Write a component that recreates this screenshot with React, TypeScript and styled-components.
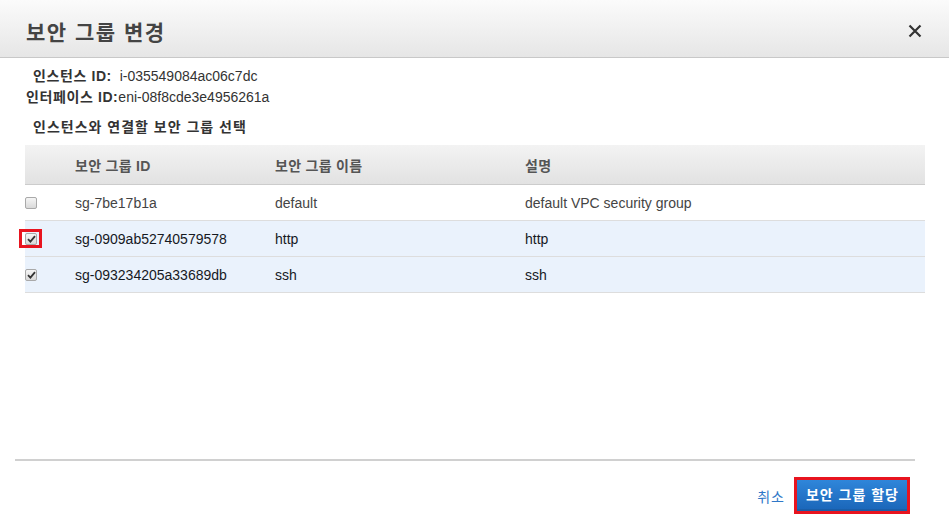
import React, { useState } from "react";
import styled, { createGlobalStyle } from "styled-components";

const GlobalStyle = createGlobalStyle`
  html, body {
    margin: 0;
    padding: 0;
    background: #fff;
  }
  body {
    font-family: "Liberation Sans", Arial, "Noto Sans CJK KR", sans-serif;
    font-size: 14px;
    color: #444;
  }
`;

const Modal = styled.div`
  width: 949px;
  height: 529px;
  display: flex;
  flex-direction: column;
  background: #fff;
`;

const ModalHeader = styled.div`
  height: 58px;
  flex-shrink: 0;
  display: flex;
  align-items: center;
  justify-content: space-between;
  padding: 5px 27px 0 26px;
  box-sizing: border-box;
  background: linear-gradient(to bottom, #fbfbfb, #e6e6e6);
  border-bottom: 1px solid #c8c8c8;
`;

const Title = styled.h1`
  margin: 0;
  font-size: 21px;
  font-weight: bold;
  letter-spacing: 1.5px;
  color: #444;
`;

const CloseButton = styled.button`
  border: 0;
  background: none;
  padding: 0;
  width: 14px;
  height: 14px;
  display: flex;
  cursor: pointer;
`;

const Body = styled.div`
  flex: 1;
  padding: 8px 24px 0 25px;
`;

const InfoLine = styled.div<{ $indent?: number }>`
  padding-left: ${(p) => p.$indent ?? 0}px;
  line-height: 21px;
  color: #333;
`;

const Label = styled.b`
  color: #333;
  letter-spacing: 0.6px;
`;

const SectionTitle = styled.div`
  margin-top: 9px;
  padding-left: 8px;
  font-weight: bold;
  letter-spacing: 1px;
  color: #333;
  line-height: 21px;
`;

const Table = styled.table`
  margin-top: 7px;
  width: 900px;
  border-collapse: collapse;
  table-layout: fixed;
`;

const HeadCell = styled.th<{ $w?: number }>`
  width: ${(p) => (p.$w ? `${p.$w}px` : "auto")};
  height: 39px;
  padding: 0;
  text-align: left;
  font-weight: bold;
  letter-spacing: 0.3px;
  color: #555;
  background: linear-gradient(to bottom, #f3f3f3, #e2e2e2);
  border-bottom: 1px solid #cccccc;
`;

const Row = styled.tr<{ $selected: boolean }>`
  background: ${(p) => (p.$selected ? "#eaf2fc" : "#fff")};
  color: ${(p) => (p.$selected ? "#16191f" : "#444")};
  border-bottom: 1px solid #dddddd;
`;

const Cell = styled.td`
  height: 35px;
  padding: 0;
  vertical-align: middle;
`;

const CheckCell = styled.td`
  height: 35px;
  padding: 0;
  vertical-align: middle;
  position: relative;
`;

const Box = styled.span`
  display: flex;
  align-items: center;
  justify-content: center;
  width: 12px;
  height: 12px;
  box-sizing: border-box;
  border: 1px solid #a9a9a9;
  border-radius: 2px;
  background: linear-gradient(to bottom, #f5f5f5, #d9d9d9);
  cursor: pointer;
`;

const Highlight = styled.span`
  position: absolute;
  left: -6px;
  top: 50%;
  margin-top: -10px;
  width: 23px;
  height: 19px;
  box-sizing: border-box;
  border: 3px solid #e8141f;
  pointer-events: none;
`;

const FooterRule = styled.div`
  margin: 0 34px 0 15px;
  border-top: 2px solid #d0d0d0;
`;

const Footer = styled.div`
  height: 68px;
  display: flex;
  align-items: center;
  justify-content: flex-end;
  gap: 9px;
  padding: 1px 39px 0 0;
  box-sizing: border-box;
`;

const CancelLink = styled.a`
  color: #2f78c8;
  font-size: 14px;
  letter-spacing: 1px;
  cursor: pointer;
`;

const PrimaryFrame = styled.span`
  display: flex;
  padding: 0;
  border: 3px solid #e8141f;
`;

const PrimaryButton = styled.button`
  height: 31px;
  padding: 0 8px 2px 9px;
  border: 0;
  border-bottom: 2px solid #1a5ea8;
  background: linear-gradient(to bottom, #2f86da, #1b67ba);
  color: #fff;
  font-family: inherit;
  font-size: 14px;
  font-weight: bold;
  letter-spacing: 1px;
  cursor: pointer;
`;

type Group = { id: string; name: string; desc: string };

const groups: Group[] = [
  { id: "sg-7be17b1a", name: "default", desc: "default VPC security group" },
  { id: "sg-0909ab52740579578", name: "http", desc: "http" },
  { id: "sg-093234205a33689db", name: "ssh", desc: "ssh" },
];

function Check({ checked, onClick }: { checked: boolean; onClick: () => void }) {
  return (
    <Box onClick={onClick}>
      {checked && (
        <svg width="9" height="8" viewBox="0 0 9 8">
          <path d="M1 4.2 L3.4 6.6 L8 1.2" fill="none" stroke="#333" strokeWidth="1.8" />
        </svg>
      )}
    </Box>
  );
}

export default function App() {
  const [selected, setSelected] = useState<string[]>([
    "sg-0909ab52740579578",
    "sg-093234205a33689db",
  ]);

  const toggle = (id: string) =>
    setSelected((s) => (s.includes(id) ? s.filter((x) => x !== id) : [...s, id]));

  return (
    <Modal>
      <GlobalStyle />
      <ModalHeader>
        <Title>보안 그룹 변경</Title>
        <CloseButton aria-label="close">
          <svg width="14" height="14" viewBox="0 0 14 14">
            <path d="M1.5 1.5 L12.5 12.5 M12.5 1.5 L1.5 12.5" stroke="#333" strokeWidth="2.2" />
          </svg>
        </CloseButton>
      </ModalHeader>

      <Body>
        <InfoLine $indent={8}>
          <Label>인스턴스 ID:</Label>&nbsp; i-035549084ac06c7dc
        </InfoLine>
        <InfoLine $indent={1}>
          <Label>인터페이스 ID:</Label>eni-08f8cde3e4956261a
        </InfoLine>
        <SectionTitle>인스턴스와 연결할 보안 그룹 선택</SectionTitle>

        <Table>
          <thead>
            <tr>
              <HeadCell $w={50} />
              <HeadCell $w={200}>보안 그룹 ID</HeadCell>
              <HeadCell $w={250}>보안 그룹 이름</HeadCell>
              <HeadCell>설명</HeadCell>
            </tr>
          </thead>
          <tbody>
            {groups.map((g, i) => {
              const on = selected.includes(g.id);
              return (
                <Row key={g.id} $selected={on}>
                  <CheckCell>
                    <Check checked={on} onClick={() => toggle(g.id)} />
                    {i === 1 && <Highlight />}
                  </CheckCell>
                  <Cell>{g.id}</Cell>
                  <Cell>{g.name}</Cell>
                  <Cell>{g.desc}</Cell>
                </Row>
              );
            })}
          </tbody>
        </Table>
      </Body>

      <FooterRule />
      <Footer>
        <CancelLink>취소</CancelLink>
        <PrimaryFrame>
          <PrimaryButton>보안 그룹 할당</PrimaryButton>
        </PrimaryFrame>
      </Footer>
    </Modal>
  );
}
